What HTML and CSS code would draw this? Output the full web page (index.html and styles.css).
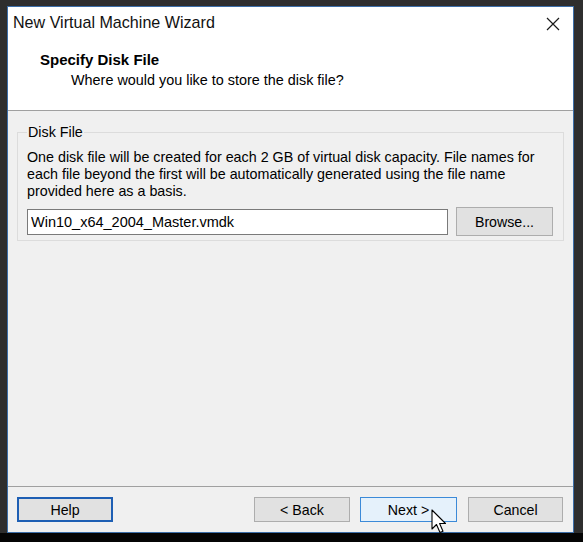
FILE: index.html
```html
<!DOCTYPE html>
<html lang="en">
<head>
    <meta charset="UTF-8">
    <meta name="viewport" content="width=device-width, initial-scale=1.0">
    <title>New Virtual Machine Wizard</title>
    <link rel="stylesheet" href="styles.css">
</head>
<body>

<div class="screen">
    <div class="window">
        <div class="top">
            <div class="titlebar">
                <span class="title">New Virtual Machine Wizard</span>
                <svg class="close" width="14" height="14" viewBox="0 0 14 14">
                    <path d="M1 1 L13 13 M13 1 L1 13" stroke="#1a1a1a" stroke-width="1.2" fill="none"/>
                </svg>
            </div>
            <div class="header">
                <h1>Specify Disk File</h1>
                <p>Where would you like to store the disk file?</p>
            </div>
        </div>

        <div class="content">
            <fieldset class="group">
                <legend>Disk File</legend>
                <p class="info">One disk file will be created for each 2 GB of virtual disk capacity. File names for<br>
                    each file beyond the first will be automatically generated using the file name<br>
                    provided here as a basis.</p>
                <div class="file-row">
                    <input type="text" class="file-input" value="Win10_x64_2004_Master.vmdk">
                    <button class="btn browse">Browse...</button>
                </div>
            </fieldset>
        </div>

        <div class="footer">
            <button class="btn default">Help</button>
            <div class="nav">
                <button class="btn">&lt; Back</button>
                <button class="btn hover next">Next &gt;</button>
                <button class="btn cancel">Cancel</button>
            </div>
        </div>
    </div>

    <svg class="cursor" width="16" height="26" viewBox="0 0 16 26">
        <path d="M1 1 L1 20 L5.5 15.5 L9 23.5 L12 22.2 L8.6 14.5 L14.5 14.5 Z" fill="#fff" stroke="#000" stroke-width="1.1" stroke-linejoin="round"/>
    </svg>
</div>

</body>
</html>
```

FILE: styles.css
```css
body { margin: 0; background: #2c2c2c; font-family: "Liberation Sans", sans-serif; color: #000; }
.screen {
    position: relative;
    width: 583px;
    height: 542px;
    box-sizing: border-box;
    padding: 6px 10px 0 7px;
    background: linear-gradient(#2e2e2e 533px, #050505 533px);
}
.window {
    width: 567px;
    height: 527px;
    box-sizing: border-box;
    border: 1px solid #3c6ea8;
    background: #f0f0f0;
    display: flex;
    flex-direction: column;
}

.top { background: #fff; border-bottom: 1px solid #a0a0a0; }
.titlebar { height: 31px; display: flex; align-items: center; padding: 0 13px 0 5px; }
.title { flex: 1; font-size: 16.1px; color: #111; }
.close { margin-top: 2px; }
.header { padding: 12px 0 20px 32px; }
.header h1 { margin: 0; font-size: 15px; font-weight: bold; line-height: 20px; }
.header p { margin: 0 0 0 31px; font-size: 14.4px; line-height: 20px; }

.content { flex: 1; padding: 13px 9px 0 9px; }
.group {
    margin: 0;
    border: 1px solid #dcdcdc;
    padding: 0 10px 4px 9px;
}
.group legend { padding: 0 1px; font-size: 14.3px; line-height: 17px; }
.info { margin: 8px 0 7px 0; font-size: 14.3px; line-height: 17px; }
.file-row { display: flex; align-items: center; gap: 8px; }
.file-input {
    flex: 1;
    height: 26px;
    box-sizing: border-box;
    border: 1px solid #7a7a7a;
    padding: 0 3px;
    font-family: "Liberation Sans", sans-serif;
    font-size: 14.5px;
    color: #000;
    background: #fff;
}

.btn {
    width: 96px;
    height: 25px;
    box-sizing: border-box;
    border: 1px solid #adadad;
    background: #e1e1e1;
    font-family: "Liberation Sans", sans-serif;
    font-size: 14.2px;
    color: #000;
    padding: 0;
}
.browse { width: 97px; height: 29px; }
.default { border: 2px solid #1e5fb4; }
.hover { border-color: #3c8ad8; background: #e5f1fb; }

.footer {
    border-top: 1px solid #a0a0a0;
    display: flex;
    padding: 10px 10px 10px 9px;
}
.nav { margin-left: auto; display: flex; gap: 10px; }
.next { width: 97px; }
.cancel { width: 95px; margin-left: 1px; }

.cursor { position: absolute; left: 431px; top: 509px; }
```
